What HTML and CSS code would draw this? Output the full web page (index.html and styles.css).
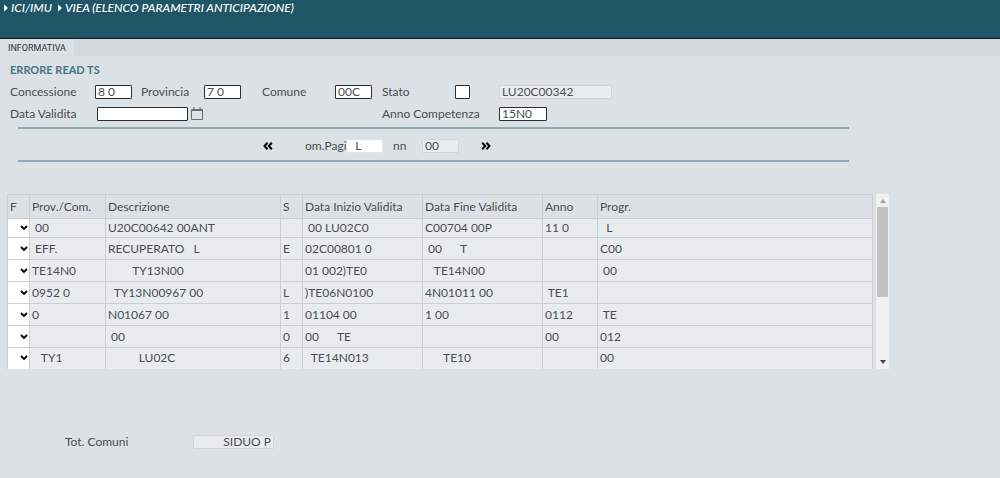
FILE: index.html
```html
<!DOCTYPE html>
<html lang="it">
<head>
<meta charset="utf-8">
<meta name="viewport" content="width=device-width, initial-scale=1">
<title>VIEA (Elenco parametri anticipazione)</title>
<link rel="stylesheet" href="styles.css">
</head>
<body>
<header class="topbar">
  <nav class="crumbs" aria-label="Percorso">
    <a class="crumb" href="#"><svg class="crumb-arrow" viewBox="0 0 4 8" aria-hidden="true"><path d="M0 0.5L4 4L0 7.5Z"/></svg>ICI/IMU</a>
    <a class="crumb" href="#"><svg class="crumb-arrow" viewBox="0 0 4 8" aria-hidden="true"><path d="M0 0.5L4 4L0 7.5Z"/></svg>VIEA (ELENCO PARAMETRI ANTICIPAZIONE)</a>
  </nav>
</header>
<nav class="tabs" aria-label="Schede"><a class="tab" href="#">INFORMATIVA</a></nav>
<main class="content">
  <h1 class="message">ERRORE READ TS</h1>
  <form class="filters">
    <label for="concessione">Concessione</label>
    <input class="field short" id="concessione" type="text" value="8 0">
    <label for="provincia">Provincia</label>
    <input class="field short" id="provincia" type="text" value="7 0">
    <label for="comune">Comune</label>
    <input class="field short" id="comune" type="text" value="00C">
    <label for="stato">Stato</label>
    <input class="field tiny" id="stato" type="text">
    <input class="field readonly" type="text" value="LU20C00342" aria-label="Descrizione stato" readonly>
    <label for="data">Data Validita</label>
    <div class="date">
      <input class="field date-field" id="data" type="text">
      <button class="icon-button" type="button" aria-label="Apri calendario"><svg class="calendar" viewBox="0 0 12 14" aria-hidden="true"><path d="M0.5 2.5H11.5V12.5H0.5ZM0.5 3.5H11.5M3 0V3M9 0V3"/></svg></button>
    </div>
    <label class="anno-label" for="anno">Anno Competenza</label>
    <input class="field medium" id="anno" type="text" value="15N0">
  </form>
  <div class="pager">
    <button class="icon-button" type="button" aria-label="Pagina precedente"><svg class="chevrons" viewBox="0 0 10 8" aria-hidden="true"><path d="M4.5 0.8L1.5 4L4.5 7.2M8.8 0.8L5.8 4L8.8 7.2"/></svg></button>
    <label class="pager-label" for="pagina">om.Pagi</label>
    <input class="field short plain" id="pagina" type="text" value="  L">
    <label class="pager-total" for="totale">nn</label>
    <input class="field short readonly" id="totale" type="text" value="00" readonly>
    <button class="icon-button next" type="button" aria-label="Pagina successiva"><svg class="chevrons" viewBox="0 0 10 8" aria-hidden="true"><path d="M1.2 0.8L4.2 4L1.2 7.2M5.5 0.8L8.5 4L5.5 7.2"/></svg></button>
  </div>
  <section class="results">
    <table class="grid">
      <colgroup><col class="c-flag"><col class="c-prov"><col class="c-desc"><col class="c-flag"><col class="c-date"><col class="c-date"><col class="c-anno"><col></colgroup>
      <thead><tr><th>F</th><th>Prov./Com.</th><th>Descrizione</th><th>S</th><th>Data Inizio Validita</th><th>Data Fine Validita</th><th>Anno</th><th>Progr.</th></tr></thead>
      <tbody>
        <tr><td class="pick"><select class="flag" aria-label="F riga 1"><option></option></select></td><td> 00</td><td>U20C00642 00ANT</td><td></td><td> 00 LU02C0</td><td>C00704 00P</td><td>11 0</td><td>  L</td></tr>
        <tr><td class="pick"><select class="flag" aria-label="F riga 2"><option></option></select></td><td> EFF.</td><td>RECUPERATO   L</td><td>E</td><td>02C00801 0</td><td> 00      T</td><td></td><td>C00</td></tr>
        <tr><td class="pick"><select class="flag" aria-label="F riga 3"><option></option></select></td><td>TE14N0</td><td>        TY13N00</td><td></td><td>01 002)TE0</td><td>   TE14N00</td><td></td><td> 00</td></tr>
        <tr><td class="pick"><select class="flag" aria-label="F riga 4"><option></option></select></td><td>0952 0</td><td>  TY13N00967 00</td><td>L</td><td>)TE06N0100</td><td>4N01011 00</td><td> TE1</td><td></td></tr>
        <tr><td class="pick"><select class="flag" aria-label="F riga 5"><option></option></select></td><td>0</td><td>N01067 00</td><td>1</td><td>01104 00</td><td>1 00</td><td>0112</td><td> TE</td></tr>
        <tr><td class="pick"><select class="flag" aria-label="F riga 6"><option></option></select></td><td></td><td> 00</td><td>0</td><td>00      TE</td><td></td><td>00</td><td>012</td></tr>
        <tr><td class="pick"><select class="flag" aria-label="F riga 7"><option></option></select></td><td>   TY1</td><td>          LU02C</td><td>6</td><td>  TE14N013</td><td>      TE10</td><td></td><td>00</td></tr>
      </tbody>
    </table>
    <div class="scrollbar" aria-hidden="true">
      <svg class="scroll-arrow dim" viewBox="0 0 6 4"><path d="M0 4L3 0L6 4Z"/></svg>
      <div class="thumb"></div>
      <svg class="scroll-arrow down" viewBox="0 0 6 4"><path d="M0 0L3 4L6 0Z"/></svg>
    </div>
  </section>
  <div class="totals">
    <label class="total-label" for="comuni">Tot. Comuni</label>
    <input class="field total readonly" id="comuni" type="text" value="SIDUO P" readonly>
  </div>
</main>
</body>
</html>
```
FILE: styles.css
```css
* { box-sizing: border-box; }
body {
  margin: 0;
  min-height: 100vh;
  background: #dce1e5;
  color: #4a4e51;
  font: 12px/14px Lato, "Open Sans", sans-serif;
}
a { color: inherit; text-decoration: none; }
input, select, button { font: inherit; color: inherit; }

.topbar { min-height: 39px; padding: 0 4px; background: #205566; border-bottom: 1px solid #0b1418; }
.crumbs { display: flex; gap: 6px; }
.crumb { display: flex; align-items: center; gap: 3px; color: #fff; font-size: 12px; line-height: 16px; font-weight: 500; font-style: italic; }
.crumb-arrow { width: 4px; height: 8px; fill: #fff; }

.tabs { display: flex; background: #d4d9dd; }
.tab { padding: 2px 8px 1px; background: #dce1e5; color: #2c3032; font: 9px/14px Roboto, sans-serif; }

.content { padding: 6px 10px 24px; }
.message { margin: 0 0 3px; color: #457485; font-size: 11px; line-height: 16px; font-weight: 700; }

.filters {
  display: grid;
  grid-template-columns: 85px 46px 63px 58px 73px 47px 73px 44px 113px;
  grid-auto-rows: 22px;
  align-items: center;
}
.field { width: 100%; height: 14px; padding: 0 2px 1px; background: #fff; border: 1px solid #2b2e30; border-radius: 1px; line-height: 11px; }
.short { width: 37px; }
.tiny { width: 15px; }
.medium { width: 48px; }
.plain { border-color: #e2e4e5; }
.readonly { background: #e8ecef; border-color: #d2d5d7; }
.date { grid-column: 2 / 7; display: flex; align-items: center; gap: 3px; padding-left: 2px; }
.date-field { width: 91px; }
.anno-label { grid-column: 7 / 9; }

.icon-button { display: flex; padding: 0; background: none; border: 0; }
.calendar { width: 12px; height: 14px; fill: none; stroke: #686c6e; }
.chevrons { width: 10px; height: 8px; fill: none; stroke: #000; stroke-width: 2; }

.pager {
  display: flex;
  align-items: center;
  max-width: 831px;
  height: 35px;
  margin: 2px 0 0 8px;
  padding: 2px 0 0 245px;
  border: 2px solid #8eaab6;
  border-width: 2px 0;
}
.pager-label { width: 41px; margin-left: 32px; overflow: hidden; }
.pager-total { width: 29px; margin-left: 10px; }
.next { margin-left: 22px; }

.results { display: flex; gap: 3px; max-width: 882px; margin: 32px 0 0 -3px; }
.grid { flex: 1; table-layout: fixed; border-collapse: collapse; }
.grid th, .grid td { height: 22px; padding: 0 2px; border: 1px solid #cdd0d2; text-align: left; font-weight: 400; white-space: pre; }
.grid th { height: 24px; }
.grid tbody tr:first-child td { height: 19px; }
.grid td { background: #e8ecef; }
.grid tbody tr:last-child td { height: 21px; border-bottom: 0; }
.grid .pick { padding: 0; background: #fff; }
.flag {
  display: block;
  width: 100%;
  height: 16px;
  appearance: none;
  background: #fff url("data:image/svg+xml,%3Csvg xmlns='http://www.w3.org/2000/svg' width='8' height='6'%3E%3Cpath d='M1 1L4 4L7 1' fill='none' stroke='%23000' stroke-width='1.8'/%3E%3C/svg%3E") no-repeat right 1px center;
  border: 0;
}
.c-flag { width: 22px; }
.c-prov { width: 76px; }
.c-desc { width: 175px; }
.c-date { width: 120px; }
.c-anno { width: 55px; }

.scrollbar { display: flex; flex-direction: column; align-items: center; width: 13px; padding: 5px 0; background: #f1f1f1; }
.scroll-arrow { width: 6px; height: 4px; fill: #444; }
.dim { fill: #a3a3a3; }
.thumb { width: 11px; height: 90px; margin-top: 4px; background: #c1c1c1; }
.down { margin-top: auto; }

.totals { display: flex; align-items: center; margin: 66px 0 0 55px; }
.total-label { width: 128px; }
.total { width: 81px; text-align: right; }
```
